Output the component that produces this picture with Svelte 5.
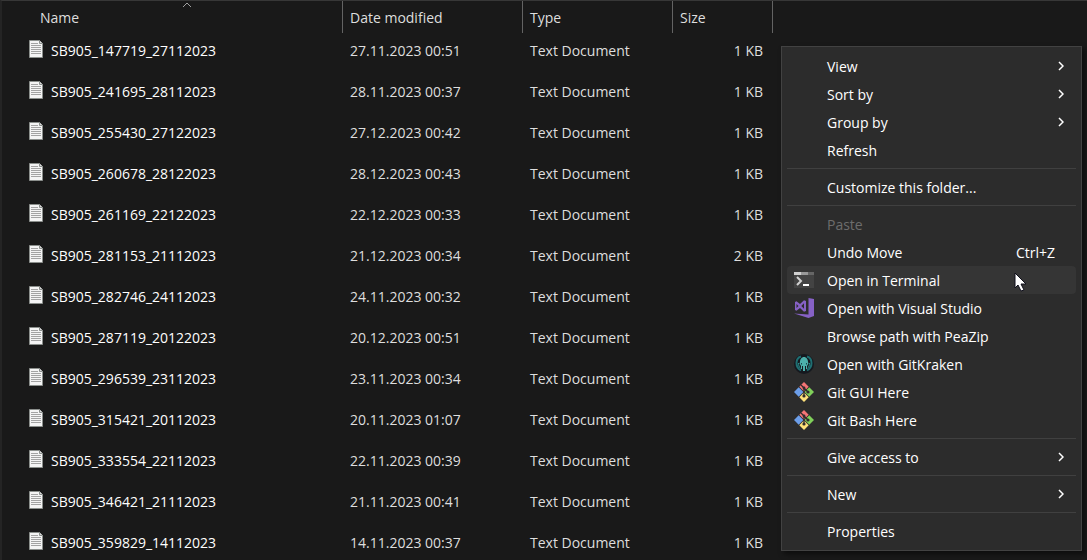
<script>
  const files = [
    { name: 'SB905_147719_27112023', date: '27.11.2023 00:51', size: '1 KB' },
    { name: 'SB905_241695_28112023', date: '28.11.2023 00:37', size: '1 KB' },
    { name: 'SB905_255430_27122023', date: '27.12.2023 00:42', size: '1 KB' },
    { name: 'SB905_260678_28122023', date: '28.12.2023 00:43', size: '1 KB' },
    { name: 'SB905_261169_22122023', date: '22.12.2023 00:33', size: '1 KB' },
    { name: 'SB905_281153_21112023', date: '21.12.2023 00:34', size: '2 KB' },
    { name: 'SB905_282746_24112023', date: '24.11.2023 00:32', size: '1 KB' },
    { name: 'SB905_287119_20122023', date: '20.12.2023 00:51', size: '1 KB' },
    { name: 'SB905_296539_23112023', date: '23.11.2023 00:34', size: '1 KB' },
    { name: 'SB905_315421_20112023', date: '20.11.2023 01:07', size: '1 KB' },
    { name: 'SB905_333554_22112023', date: '22.11.2023 00:39', size: '1 KB' },
    { name: 'SB905_346421_21112023', date: '21.11.2023 00:41', size: '1 KB' },
    { name: 'SB905_359829_14112023', date: '14.11.2023 00:37', size: '1 KB' }
  ];

  // one inner array per separated section
  const groups = [
    [
      { label: 'View', sub: true },
      { label: 'Sort by', sub: true },
      { label: 'Group by', sub: true },
      { label: 'Refresh' }
    ],
    [{ label: 'Customize this folder...' }],
    [
      { label: 'Paste', disabled: true },
      { label: 'Undo Move', keys: 'Ctrl+Z' },
      { label: 'Open in Terminal', icon: 'terminal', active: true },
      { label: 'Open with Visual Studio', icon: 'vs' },
      { label: 'Browse path with PeaZip' },
      { label: 'Open with GitKraken', icon: 'kraken' },
      { label: 'Git GUI Here', icon: 'git' },
      { label: 'Git Bash Here', icon: 'git' }
    ],
    [{ label: 'Give access to', sub: true }],
    [{ label: 'New', sub: true }],
    [{ label: 'Properties' }]
  ];
</script>

{#snippet menuIcon(name)}
  <svg class="menu-icon" width="20" height="20" viewBox="0 0 20 20" aria-hidden="true">
    {#if name === 'terminal'}
      <path d="M0 2h20v16H0z" fill="#434343" />
      <path d="M0 2h7v3H0z" fill="#cfcfcf" />
      <path d="M7 2h7v3H7z" fill="#999" />
      <path d="M14 2h6v3h-6z" fill="#666" />
      <path d="M3 7l4 4-4 4" fill="none" stroke="#d2d2d2" stroke-width="2" />
      <path d="M9 14h6v2H9z" fill="#fff" />
    {:else if name === 'vs'}
      <path d="M14.5 0L20 1v17l-5.500 2L0 15.500l14.500 1z" fill="#8661c5" />
      <path d="M1 4l1.500-.8L6 6l4-3.800 2 .8v10l-2 .8L6 10l-3.500 2.800L1 12zM2.500 6v4l2-2zM10 5.300L7.300 8l2.700 2.700z" fill="#8661c5" fill-rule="evenodd" />
    {:else if name === 'kraken'}
      <circle cx="10" cy="10" r="10" fill="#15191f" />
      <path d="M7 2.500C1 4.500 1 13 7 16.500M13 2.500c6 2 6 10.500 0 14" fill="none" stroke="#1f6f72" stroke-width="2" />
      <path d="M4.500 9c0 2 .5 4 2 5.500M15.500 9c0 2-.5 4-2 5.500" fill="none" stroke="#2b8f8e" />
      <path d="M10 3C7.500 3 6 5.500 6 8l-.5 1.500L7 12v3h1v-3h1v5h2v-5h1v3h1v-3l1.500-2.500L14 8c0-2.500-1.500-5-4-5z" fill="#4cb0ab" />
      <path d="M7 9h1v1.500H7zM12 9h1v1.500h-1z" fill="#17454a" />
    {:else}
      <path d="M10 0l4.700 4.700L10 9.400 5.300 4.700z" fill="#f57575" />
      <path d="M4.700 5.300L9.400 10l-4.700 4.700L0 10z" fill="#6c9ee9" />
      <path d="M15.300 5.300L20 10l-4.700 4.700-4.700-4.700z" fill="#80d05a" />
      <path d="M10 10.600l4.700 4.700L10 20l-4.700-4.700z" fill="#ffe27a" />
      <path d="M7 3l3 3v8M10 6l4 4" fill="none" stroke="#302c2e" stroke-width="1.300" />
      <circle cx="10" cy="6" r="1.400" fill="#302c2e" />
      <circle cx="10" cy="14" r="1.600" fill="#302c2e" />
      <circle cx="14" cy="10" r="1.600" fill="#302c2e" />
    {/if}
  </svg>
{/snippet}

<main>
  <table>
    <colgroup>
      <col class="col-name" />
      <col class="col-date" />
      <col class="col-type" />
      <col class="col-size" />
    </colgroup>
    <thead>
      <tr>
        <th class="name" aria-sort="ascending">
          Name
          <svg class="sort" width="10" height="6" viewBox="0 0 10 6" aria-hidden="true">
            <path d="M1 5l4-4 4 4" fill="none" stroke="#a0a0a0" />
          </svg>
        </th>
        <th>Date modified</th>
        <th>Type</th>
        <th>Size</th>
      </tr>
    </thead>
    <tbody>
      {#each files as file}
        <tr>
          <td class="name">
            <div class="file">
              <svg width="15" height="18" viewBox="0 0 15 18" aria-hidden="true">
                <path d="M.5.5h10l3 3v14H.5z" fill="#f4f4f4" stroke="#8b8f8c" />
                <path d="M10.5.5v3h3" fill="#d9d9d9" stroke="#8b8f8c" />
                <path d="M2 3.5h7M2 5.5h10M2 7.5h10M2 9.5h10M2 11.5h10M2 13.5h10" stroke="#a3a3a3" />
              </svg>
              <span>{file.name}</span>
            </div>
          </td>
          <td>{file.date}</td>
          <td>Text Document</td>
          <td class="size">{file.size}</td>
        </tr>
      {/each}
    </tbody>
  </table>

  <div class="menu" role="menu">
    {#each groups as group}
      <div class="group" role="group">
        {#each group as item}
          <button type="button" role="menuitem" class:active={item.active} disabled={item.disabled}>
            {#if item.icon}{@render menuIcon(item.icon)}{/if}
            <span class="label">{item.label}</span>
            {#if item.keys}<span class="keys">{item.keys}</span>{/if}
            {#if item.sub}
              <svg width="6" height="10" viewBox="0 0 6 10" aria-hidden="true">
                <path d="M1 1l4 4-4 4" fill="none" stroke="#fff" stroke-width="1.5" />
              </svg>
            {/if}
            {#if item.active}
              <svg class="cursor" width="13" height="20" viewBox="0 0 13 20" aria-hidden="true">
                <path d="M1 1v15l3-3 3 6 3-1-3-6h5z" fill="#fff" stroke="#10101c" />
              </svg>
            {/if}
          </button>
        {/each}
      </div>
    {/each}
  </div>
</main>

<style>
  :global(body) {
    background: #191919;
  }

  main {
    position: relative;
    box-sizing: border-box;
    height: 100vh;
    overflow: hidden;
    border-top: 1px solid #373737;
    border-left: 2px solid #242424;
    background: #191919;
    color: #dedede;
    font-family: "Open Sans", "Noto Sans", sans-serif;
    font-size: 14px;
    line-height: 22px;
  }

  table {
    width: 771px;
    table-layout: fixed;
    border-collapse: separate;
    border-spacing: 0;
  }

  .col-name {
    width: 341px;
  }

  .col-date {
    width: 180px;
  }

  .col-type {
    width: 150px;
  }

  .col-size {
    width: 100px;
  }

  th {
    position: relative;
    box-sizing: border-box;
    height: 32px;
    padding: 2px 7px 0;
    border-right: 1px solid #636363;
    font-weight: 400;
    text-align: left;
  }

  th.name {
    padding-left: 38px;
  }

  .sort {
    position: absolute;
    top: 1px;
    left: 180px;
  }

  td {
    box-sizing: border-box;
    height: 41px;
    padding: 7px 7px 0;
    vertical-align: top;
    white-space: nowrap;
  }

  td.name {
    padding-left: 27px;
    color: #fff;
  }

  td.size {
    padding-right: 10px;
    text-align: right;
  }

  .file {
    display: flex;
    gap: 7px;
  }

  .menu {
    position: absolute;
    top: 45px;
    right: 5px;
    box-sizing: border-box;
    width: 301px;
    padding: 5px;
    border: 1px solid #424242;
    background: #2c2c2c;
    box-shadow: 3px 3px 5px rgba(0, 0, 0, 0.5);
  }

  .group + .group {
    margin-top: 4px;
    padding-top: 4px;
    border-top: 1px solid #404040;
  }

  button {
    position: relative;
    display: flex;
    align-items: center;
    width: 100%;
    height: 28px;
    padding: 0 12px 0 40px;
    border: 0;
    border-radius: 4px;
    background: none;
    color: #fff;
    font: inherit;
    text-align: left;
  }

  button:hover,
  button.active {
    background: #353535;
  }

  button:disabled {
    background: none;
    color: #6d6d6d;
  }

  .label,
  .keys {
    padding-top: 2px;
  }

  .label {
    flex: 1;
  }

  .keys {
    margin-right: 9px;
  }

  .menu-icon {
    position: absolute;
    top: 4px;
    left: 7px;
  }

  .cursor {
    position: absolute;
    top: 6px;
    right: 49px;
  }
</style>
